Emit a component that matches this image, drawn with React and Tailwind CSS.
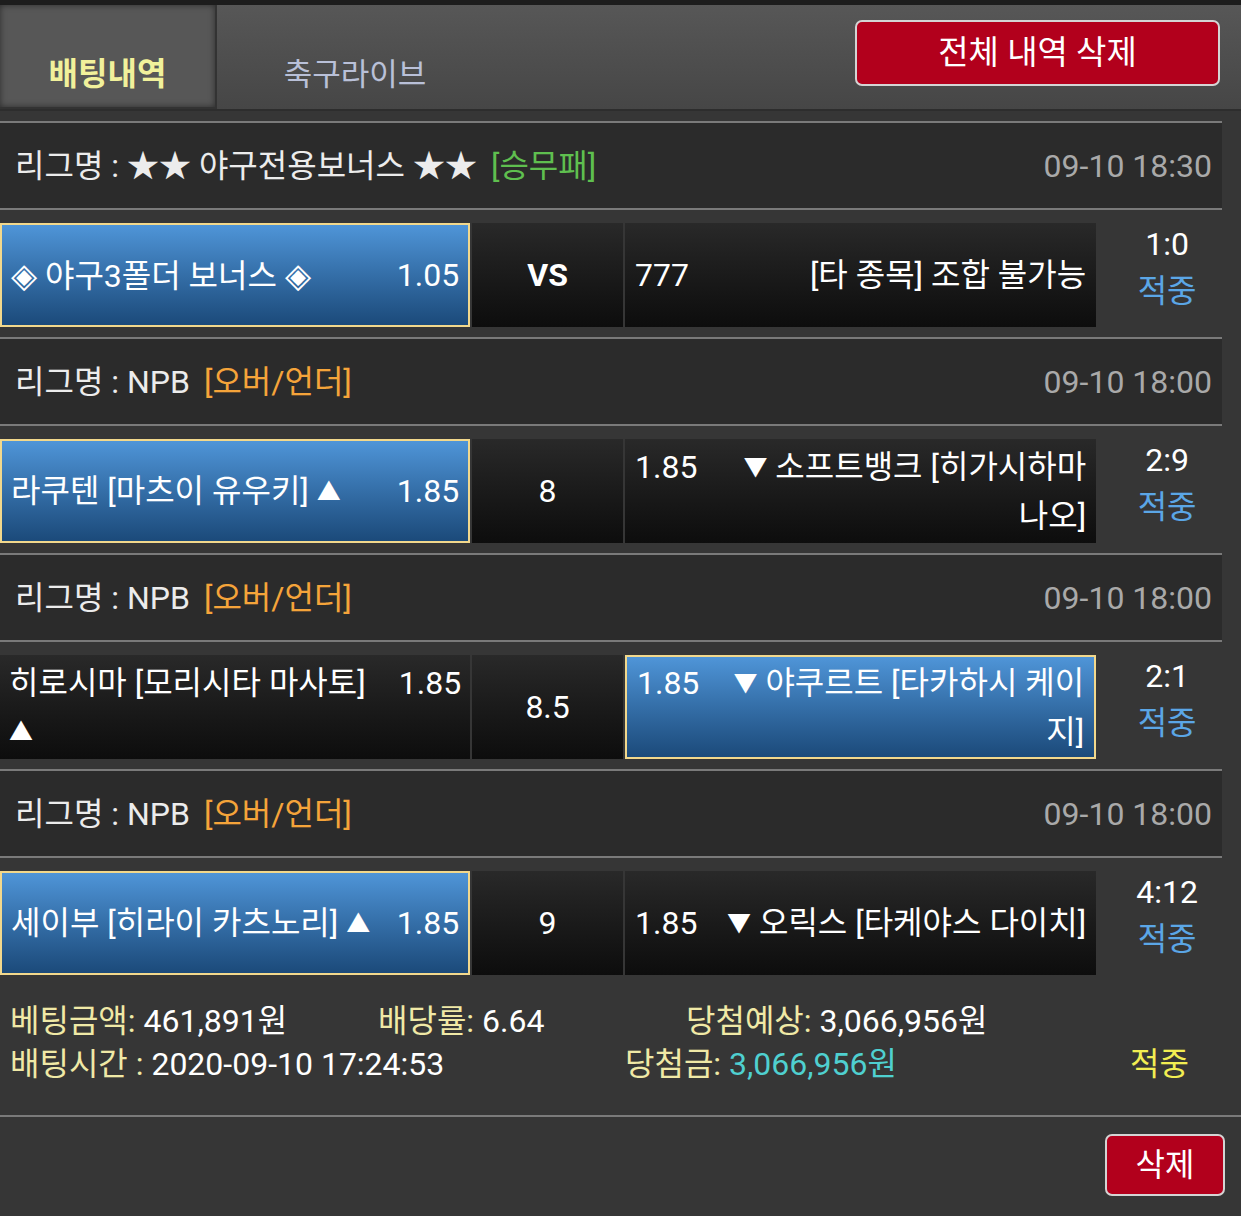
import React from "react";

const Tri = ({ c }) => <span className="text-[24px] align-[2px]">{c}</span>;

const groups = [
  {
    league: "★★ 야구전용보너스 ★★",
    type: "[승무패]",
    typeColor: "text-[#5fbf4f]",
    date: "09-10 18:30",
    home: [<><span className="text-[34px]">◈</span> 야구3폴더 보너스 <span className="text-[34px]">◈</span></>],
    homeOdds: "1.05",
    mid: "VS",
    midBold: true,
    away: ["[타 종목] 조합 불가능"],
    awayOdds: "777",
    picked: "home",
    score: "1:0",
  },
  {
    league: "NPB",
    type: "[오버/언더]",
    typeColor: "text-[#f5a43a]",
    date: "09-10 18:00",
    home: [<>라쿠텐 [마츠이 유우키] <Tri c="▲" /></>],
    homeOdds: "1.85",
    mid: "8",
    away: [<><Tri c="▼" /> 소프트뱅크 [히가시하마</>, "나오]"],
    awayOdds: "1.85",
    picked: "home",
    score: "2:9",
  },
  {
    league: "NPB",
    type: "[오버/언더]",
    typeColor: "text-[#f5a43a]",
    date: "09-10 18:00",
    home: ["히로시마 [모리시타 마사토]", <Tri c="▲" />],
    homeOdds: "1.85",
    mid: "8.5",
    away: [<><Tri c="▼" /> 야쿠르트 [타카하시 케이</>, "지]"],
    awayOdds: "1.85",
    picked: "away",
    score: "2:1",
  },
  {
    league: "NPB",
    type: "[오버/언더]",
    typeColor: "text-[#f5a43a]",
    date: "09-10 18:00",
    home: [<>세이부 [히라이 카츠노리] <Tri c="▲" /></>],
    homeOdds: "1.85",
    mid: "9",
    away: [<><Tri c="▼" /> 오릭스 [타케야스 다이치]</>],
    awayOdds: "1.85",
    picked: "home",
    score: "4:12",
  },
];

const cellBase = "h-[104px] flex items-center";
const darkCell = "bg-linear-to-b from-[#292929] to-[#0d0d0d]";
const blueCell = "bg-linear-to-b from-[#4f95d8] to-[#1b4a7a] border-2 border-[#f2d88c]";

const Group = ({ g }) => {
  return (
    <>
      {/* league header */}
      <div className="border-t-2 border-[#7a7a7a] bg-[#2b2b2b] h-[87px] flex items-center justify-between pl-[15px] pr-[10px]">
        <div className="text-[#ececec]">
          리그명 : {g.league}
          <span className={`ml-[14px] ${g.typeColor}`}>{g.type}</span>
        </div>
        <div className="text-[#a9a9a9]">{g.date}</div>
      </div>
      {/* match */}
      <div className="border-t-2 border-[#7a7a7a] h-[129px] pt-[13px] flex gap-[2px]">
        <div className={`w-[471px] ${cellBase} ${g.picked === "home" ? blueCell : darkCell} px-[9px]`}>
          <div className="w-full flex items-start justify-between leading-[48px] text-white">
            <div>
              {g.home.map((l, i) => (
                <div key={i} className="whitespace-nowrap">{l}</div>
              ))}
            </div>
            <div>{g.homeOdds}</div>
          </div>
        </div>
        <div className={`w-[151px] ${cellBase} ${darkCell} justify-center text-white ${g.midBold ? "font-bold" : ""}`}>
          {g.mid}
        </div>
        <div className={`w-[472px] ${cellBase} ${g.picked === "away" ? blueCell : darkCell} px-[10px]`}>
          <div className="w-full flex items-start justify-between leading-[48px] text-white">
            <div>{g.awayOdds}</div>
            <div className="text-right">
              {g.away.map((l, i) => (
                <div key={i} className="whitespace-nowrap">{l}</div>
              ))}
            </div>
          </div>
        </div>
        <div className="w-[124px] h-[104px] pl-[14px] pb-[14px] flex flex-col items-center justify-center leading-[47px]">
          <div className="text-white">{g.score}</div>
          <div className="text-[#5ba6e6]">적중</div>
        </div>
      </div>
    </>
  );
};

const App = () => {
  return (
    <div className="min-h-[1216px] w-[1241px] bg-[#363636] text-[32px] font-[family-name:Roboto,'Noto_Sans_CJK_KR',sans-serif]">
      <div className="h-[5px] bg-[#1d1d1d]"></div>
      {/* tabs */}
      <div className="h-[106px] flex bg-linear-to-b from-[#575757] to-[#464646] border-b-2 border-[#2d2d2d]">
        <div className="w-[217px] flex items-center justify-center pt-[36px] bg-[#575757] border-r-2 border-b-2 border-[#333333] shadow-[inset_0_0_6px_rgba(0,0,0,0.5)] font-bold text-[32px] text-[#f1f19b]">
          배팅내역
        </div>
        <div className="w-[276px] flex items-center justify-center pt-[36px] text-[31px] text-[#b9c0d8]">
          축구라이브
        </div>
        <div className="ml-auto mr-[21px] mt-[15px]">
          <button className="w-[365px] h-[66px] bg-[#b2001c] border-2 border-[#d4d4d4] rounded-[7px] text-white text-[33px]">
            전체 내역 삭제
          </button>
        </div>
      </div>
      {/* bet list */}
      <div className="w-[1222px] mt-[10px]">
        {groups.map((g, i) => (
          <Group key={i} g={g} />
        ))}
      </div>
      {/* summary */}
      <div className="pt-[15px] pb-[29px] pl-[10px] leading-[43px]">
        <div className="flex">
          <div className="w-[368px] text-white">
            <span className="text-[#f0e9a6]">베팅금액:</span> 461,891원
          </div>
          <div className="w-[308px] text-white">
            <span className="text-[#f0e9a6]">배당률:</span> 6.64
          </div>
          <div className="text-white">
            <span className="text-[#f0e9a6]">당첨예상:</span> 3,066,956원
          </div>
        </div>
        <div className="flex">
          <div className="w-[615px] text-white">
            <span className="text-[#f0e9a6]">배팅시간 :</span> 2020-09-10 17:24:53
          </div>
          <div className="w-[505px]">
            <span className="text-[#f0e9a6]">당첨금:</span>{" "}
            <span className="text-[#4fd0d0]">3,066,956원</span>
          </div>
          <div className="text-[#f2ee52]">적중</div>
        </div>
      </div>
      <div className="border-t-2 border-[#7a7a7a] flex justify-end pt-[17px] pr-[16px]">
        <button className="w-[120px] h-[62px] bg-[#b2001c] border-2 border-[#d4d4d4] rounded-[7px] text-white text-[32px]">
          삭제
        </button>
      </div>
    </div>
  );
};

export default App;
